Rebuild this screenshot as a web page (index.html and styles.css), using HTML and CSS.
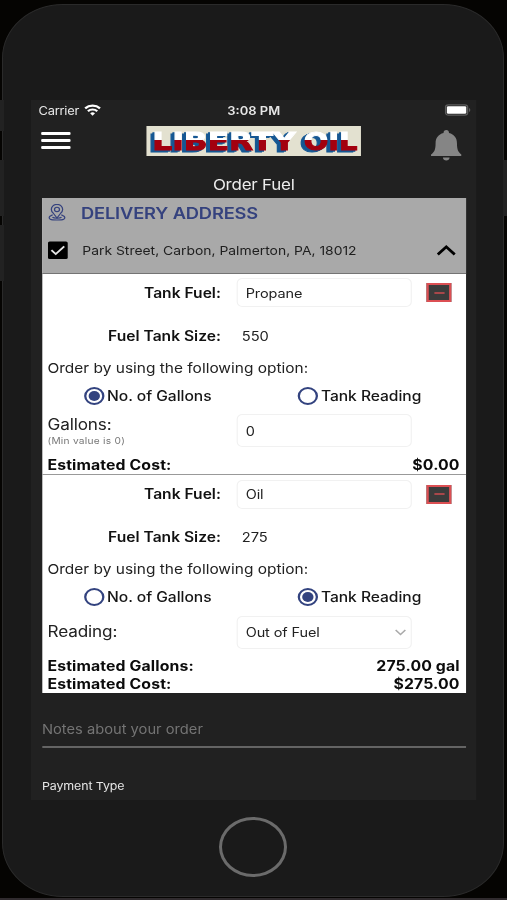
FILE: index.html
```html
<!DOCTYPE html>
<html lang="en">
<head>
<meta charset="utf-8">
<title>Order Fuel</title>
<link rel="stylesheet" href="styles.css">
</head>
<body>
<i class="key key-mute"></i><i class="key key-up"></i><i class="key key-down"></i><i class="key key-power"></i>
<div class="phone">
  <main class="screen">
    <div class="status">
      <div class="carrier">Carrier
        <svg width="15" height="12" viewBox="0 0 16 12" preserveAspectRatio="none" fill="none" stroke="#fff" stroke-width="2.2"><path d="M1 4.4a10.2 10.2 0 0 1 14 0M3.6 7.3a6.3 6.3 0 0 1 8.8 0"/><path d="M8 11.7 5.7 9.3a3.3 3.3 0 0 1 4.6 0z" fill="#fff" stroke="none"/></svg>
      </div>
      <div class="time">3:08 PM</div>
      <div class="battery"><svg width="24" height="12" viewBox="0 0 24 12"><rect x=".8" y=".9" width="19.6" height="10.2" rx="2.6" fill="none" stroke="#5c5c5c" stroke-width="1.2"/><rect x="2" y="2.2" width="17.2" height="7.6" rx="1.2" fill="#fff"/><path d="M21.6 4v4c1.6-.6 1.6-3.4 0-4z" fill="#5c5c5c"/></svg></div>
    </div>
    <header class="header">
      <div class="menu"><i></i><i></i><i></i></div>
      <svg class="logo" viewBox="0 0 216 30" preserveAspectRatio="none">
        <defs><linearGradient id="split" gradientUnits="userSpaceOnUse" x1="0" y1="0" x2="0" y2="30"><stop offset=".47" stop-color="#fff"/><stop offset=".47" stop-color="#a3000f"/></linearGradient></defs>
        <rect width="216" height="30" fill="#e3e1d0"/>
        <g class="logo-text">
          <text x="6" y="23.500" textLength="144" lengthAdjust="spacingAndGlyphs">LIBERTY</text>
          <text x="158" y="23.500" textLength="54" lengthAdjust="spacingAndGlyphs">OIL</text>
        </g>
      </svg>
      <svg class="bell" viewBox="0 0 30 31" preserveAspectRatio="none" fill="#858585"><path d="M15 0c1.700 0 2.700 1.200 2.700 2.900C22.800 4.200 25.500 8 25.500 13c0 7 1.500 9.500 4.500 11.500V26H0v-1.500C3 22.500 4.500 20 4.500 13c0-5 2.700-8.800 7.800-10.100C12.300 1.200 13.300 0 15 0z"/><path d="M11.700 27.500h6.600c0 4-6.600 4-6.600 0z"/></svg>
    </header>
    <h1>Order Fuel</h1>
    <section class="card">
      <div class="address">
        <div class="address-title">
          <svg width="16" height="17" viewBox="0 0 16 17" fill="none" stroke="#35427e" stroke-width="1.1"><path d="M8 14 4.600 9A5 5 0 1 1 11.400 9z"/><circle cx="8" cy="5.400" r="2.200"/><path d="M4.200 10.800 1.500 12.500C.2 15 2 16 8 16s7.800-1 6.500-3.500l-2.700-1.700M4 13.200c1 1.300 7 1.300 8 0"/></svg>
          <h2>DELIVERY ADDRESS</h2>
        </div>
        <div class="address-line">
          <svg width="17.500" height="18" viewBox="0 0 17 18" preserveAspectRatio="none"><rect y=".5" width="17" height="17.500" rx="1.500" fill="#000"/><path d="m3 9.200 3.700 3.900L14 5.300" fill="none" stroke="#e4e4e4" stroke-width="1.700"/></svg>
          <span>Park Street, Carbon, Palmerton, PA, 18012</span>
          <svg width="17" height="12" viewBox="0 0 17 12" fill="none" stroke="#000" stroke-width="2.500"><path d="m1 10.500 7.500-7.600L16 10.500"/></svg>
        </div>
      </div>

      <div class="tank">
        <div class="row fuel"><b>Tank Fuel:</b><div class="field">Propane</div><button class="minus"><i></i></button></div>
        <div class="row size"><b>Fuel Tank Size:</b><span>550</span></div>
        <p class="prompt">Order by using the following option:</p>
        <div class="options"><label><i class="radio on"></i>No. of Gallons</label><label><i class="radio"></i>Tank Reading</label></div>
        <div class="row quantity"><div class="name two-line">Gallons:<small>(Min value is 0)</small></div><div class="field">0</div></div>
        <dl class="totals"><div><dt>Estimated Cost:</dt><dd>$0.00</dd></div></dl>
      </div>

      <div class="tank">
        <div class="row fuel"><b>Tank Fuel:</b><div class="field">Oil</div><button class="minus"><i></i></button></div>
        <div class="row size"><b>Fuel Tank Size:</b><span>275</span></div>
        <p class="prompt">Order by using the following option:</p>
        <div class="options"><label><i class="radio"></i>No. of Gallons</label><label><i class="radio on"></i>Tank Reading</label></div>
        <div class="row quantity"><div class="name">Reading:</div><div class="field">Out of Fuel<svg width="10" height="7" viewBox="0 0 10 7" fill="none" stroke="#aaa" stroke-width="1.400"><path d="m.7 1 4.300 4.500L9.300 1"/></svg></div></div>
        <dl class="totals"><div><dt>Estimated Gallons:</dt><dd>275.00 gal</dd></div><div><dt>Estimated Cost:</dt><dd>$275.00</dd></div></dl>
      </div>
    </section>
    <div class="notes">Notes about your order</div>
    <div class="payment">Payment Type</div>
  </main>
  <div class="home"></div>
</div>
</body>
</html>
```
FILE: styles.css
```css
* { box-sizing: border-box; }

body {
  margin: 0;
  height: 900px;
  padding: 4px 3px 0 2px;
  position: relative;
  overflow: hidden;
  background: #050402;
  border-bottom: 2px solid #302b2e;
  font-family: Inter, "Liberation Sans", sans-serif;
  color: #222;
}

.phone {
  height: 893px;
  padding: 95px 0 0 28px;
  background: #1a1a1a;
  border: 1px solid #2a2a2a;
  border-radius: 61px / 54px;
}

/* side buttons overlap the edge of the shell */
.key { position: absolute; background: #222; width: 4px; height: 56px; left: 0; }
.key-mute { top: 100px; height: 31px; }
.key-up { top: 160px; }
.key-down { top: 225px; }
.key-power { top: 160px; left: auto; right: 0; }

/* the display is stretched horizontally */
.screen {
  width: 394px;
  height: 700px;
  padding: 0 9.500px 0 9.700px;
  background: #212121;
  transform: scaleX(1.13);
  transform-origin: 0 0;
  overflow: hidden;
}

.status {
  display: grid;
  grid-template-columns: 1fr auto 1fr;
  align-items: center;
  height: 21px;
  color: #e8e8e8;
  font-size: 11.400px;
}
.carrier { display: flex; align-items: center; gap: 4px; margin-left: -3px; letter-spacing: -.22px; }
.carrier svg { margin-top: -2px; }
.time { font-weight: 600; font-size: 11.500px; }
.battery { display: flex; justify-content: flex-end; margin: -2px -5px 0 0; }

.header { display: flex; height: 50px; align-items: flex-start; }
.menu { display: flex; flex-direction: column; gap: 4px; width: 26px; margin: 11px 0 0 -1px; }
.menu i { height: 3px; background: #fff; border-radius: 1px; }
.logo { width: 190.500px; height: 30px; margin: 5px 0 0 67.300px; }
.logo-text {
  font: 700 25.500px "DejaVu Sans", sans-serif;
  fill: url(#split);
  stroke: url(#split);
  stroke-width: 1px;
  filter: drop-shadow(-1.200px 1px 0 #155793) drop-shadow(-1.200px 1px 0 #155793);
}
.bell { width: 27px; height: 31px; margin: 9px 3.500px 0 auto; }

h1 {
  margin: 0;
  height: 26.500px;
  line-height: 28px;
  text-align: center;
  font-size: 15px;
  font-weight: 400;
  letter-spacing: -.2px;
  color: #ececec;
}

.card { background: #fff; height: 495.500px; }
.address { height: 76px; background: #a9a9a9; border-bottom: 1.500px solid #747474; padding: 0 8.800px 0 5.500px; }
.address-title { display: flex; align-items: center; height: 30px; gap: 13px; }
h2 { margin: 0; font-size: 16.200px; font-weight: 600; letter-spacing: -.14px; color: #35427e; }
.address-line { display: flex; align-items: center; height: 45px; gap: 12.700px; font-size: 12.300px; color: #1e1e1e; }
.address-line svg:last-child { margin-left: auto; }

.tank { position: relative; padding: 0 5.200px 0 4.900px; }
.tank + .tank { border-top: 1px solid #999; }
.row { display: grid; grid-template-columns: 153.500px 154.500px auto; column-gap: 14.400px; align-items: center; font-size: 13.800px; }
.row b { font-weight: 600; text-align: right; color: #111; letter-spacing: 0; }
.fuel { height: 38px; }
.size { height: 48px; font-size: 13px; }
.size b { font-size: 13.800px; }
.size span { padding-left: 4px; }
.field {
  display: flex;
  align-items: center;
  justify-content: space-between;
  height: 29px;
  padding: 1px 4px 0 6.500px;
  border: 1px solid #f1f1f1;
  border-radius: 5px;
  font-size: 12.800px;
  letter-spacing: -.08px;
}
.minus {
  display: grid;
  place-items: center;
  width: 22.500px;
  height: 19px;
  margin: 0 0 0 -1.500px;
  padding: 0;
  background: #3b3b3b;
  border: 2px solid #dc4f53;
}
.minus i { width: 9px; height: 2px; background: #a9474a; }
.prompt { margin: 0; height: 18px; line-height: 17px; font-size: 13.700px; }
.options { display: grid; grid-template-columns: 189.300px auto; height: 36px; padding-left: 32.400px; }
.options label { display: flex; align-items: center; gap: 2.300px; font-size: 13.800px; font-weight: 500; letter-spacing: -.03px; color: #161616; }
.radio { display: grid; place-items: center; width: 18px; height: 18px; border: 2px solid #33437f; border-radius: 50%; }
.radio.on::after { content: ""; width: 10px; height: 10px; border-radius: 50%; background: #33437f; }
.quantity { height: 33px; margin-top: .5px; }
.quantity .field { height: 33px; }
.name { font-size: 15.200px; letter-spacing: -.12px; line-height: 18px; }
.two-line { padding-top: 2px; }
.name small { display: block; font-size: 9px; line-height: 13px; letter-spacing: .22px; color: #777; }
.totals { margin: 0; padding-top: 8.500px; height: 27px; }
.totals div { display: flex; justify-content: space-between; height: 17.500px; line-height: 18px; font-size: 14px; font-weight: 700; color: #0b0b0b; letter-spacing: .1px; }
.totals dd { margin: 0; }

.notes { height: 54.500px; padding-top: 26px; border-bottom: 2px solid #646464; font-size: 13px; line-height: 20px; color: #747474; }
.payment { padding-top: 28px; font-size: 11px; line-height: 20px; letter-spacing: -.1px; color: #e6e6e6; }

.home { width: 68px; height: 60px; margin: 17px 0 0 188px; border: 3px solid #6b6b6b; border-radius: 50%; }
```
